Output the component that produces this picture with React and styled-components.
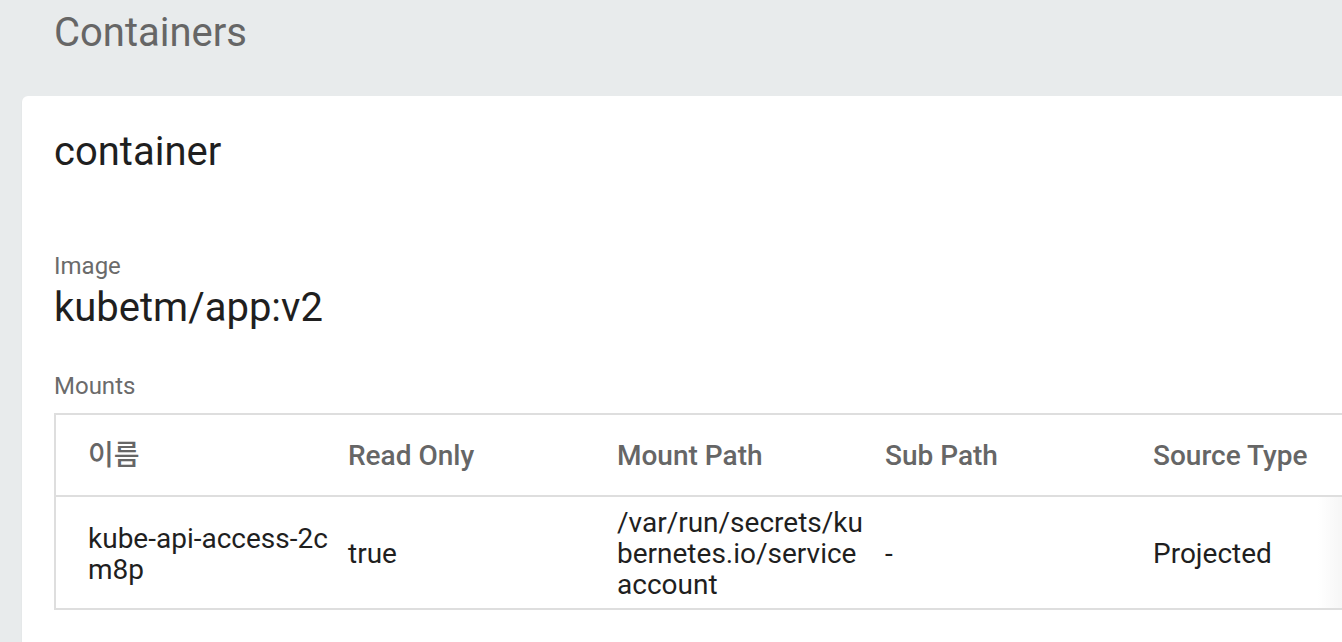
import styled, { createGlobalStyle } from 'styled-components';

const GlobalStyle = createGlobalStyle`
  html, body {
    margin: 0;
    padding: 0;
    background: #e8ebec;
    overflow: hidden;
  }

  body {
    font-family: Roboto, "Noto Sans CJK KR", "Liberation Sans", sans-serif;
  }
`;

const Page = styled.div`
  width: 1420px;
  min-height: 642px;
  padding: 9px 0 0 22px;
  box-sizing: border-box;
`;

const PageTitle = styled.h1`
  margin: 0 0 39px 32px;
  font-size: 40px;
  line-height: 48px;
  font-weight: 400;
  color: #666;
`;

const Card = styled.section`
  background: #fff;
  border-radius: 6px 0 0 0;
  box-shadow: 0 1px 2px rgba(0, 0, 0, 0.06);
  padding: 32px 0 40px 32px;
`;

const CardTitle = styled.h2`
  margin: 0 0 76px;
  font-size: 40px;
  line-height: 48px;
  font-weight: 400;
  color: #1f1f1f;
`;

const Label = styled.div`
  font-size: 24px;
  line-height: 28px;
  color: #6b6b6b;
  margin-bottom: ${(p) => p.$gap || 4}px;
`;

const Value = styled.div`
  font-size: 40px;
  line-height: 48px;
  color: #1f1f1f;
  margin-bottom: 40px;
`;

const Table = styled.div`
  border: 2px solid #dedede;
  border-right: none;
`;

const Row = styled.div`
  display: grid;
  grid-template-columns: 282px 269px 268px 268px 1fr;
  align-items: center;
  min-height: ${(p) => (p.$head ? 80 : 0)}px;
  border-top: ${(p) => (p.$head ? 'none' : '2px solid #dedede')};
  background: ${(p) =>
    p.$head ? '#fff' : 'linear-gradient(to right, #fff 1262px, #f6f6f6 1286px)'};
`;

const Cell = styled.div`
  padding: ${(p) => (p.$head ? '0 10px' : '10px 10px 8px')};
  font-size: 28px;
  line-height: 31px;
  font-weight: ${(p) => (p.$head ? 500 : 400)};
  color: ${(p) => (p.$head ? '#666' : '#1f1f1f')};
  word-break: break-all;

  &:first-child {
    padding-left: 32px;
  }
`;

const columns = ['이름', 'Read Only', 'Mount Path', 'Sub Path', 'Source Type'];

const mounts = [
  {
    name: 'kube-api-access-2cm8p',
    readOnly: 'true',
    mountPath: '/var/run/secrets/kubernetes.io/serviceaccount',
    subPath: '-',
    sourceType: 'Projected',
  },
];

const App = () => {
  return (
    <>
      <GlobalStyle />
      <Page>
        <PageTitle>Containers</PageTitle>
        <Card>
          <CardTitle>container</CardTitle>
          <Label>Image</Label>
          <Value>kubetm/app:v2</Value>
          <Label $gap={13}>Mounts</Label>
          <Table>
            <Row $head>
              {columns.map((c) => (
                <Cell $head key={c}>{c}</Cell>
              ))}
            </Row>
            {mounts.map((m) => (
              <Row key={m.name}>
                <Cell>{m.name}</Cell>
                <Cell>{m.readOnly}</Cell>
                <Cell>{m.mountPath}</Cell>
                <Cell>{m.subPath}</Cell>
                <Cell>{m.sourceType}</Cell>
              </Row>
            ))}
          </Table>
        </Card>
      </Page>
    </>
  );
};

export default App;
